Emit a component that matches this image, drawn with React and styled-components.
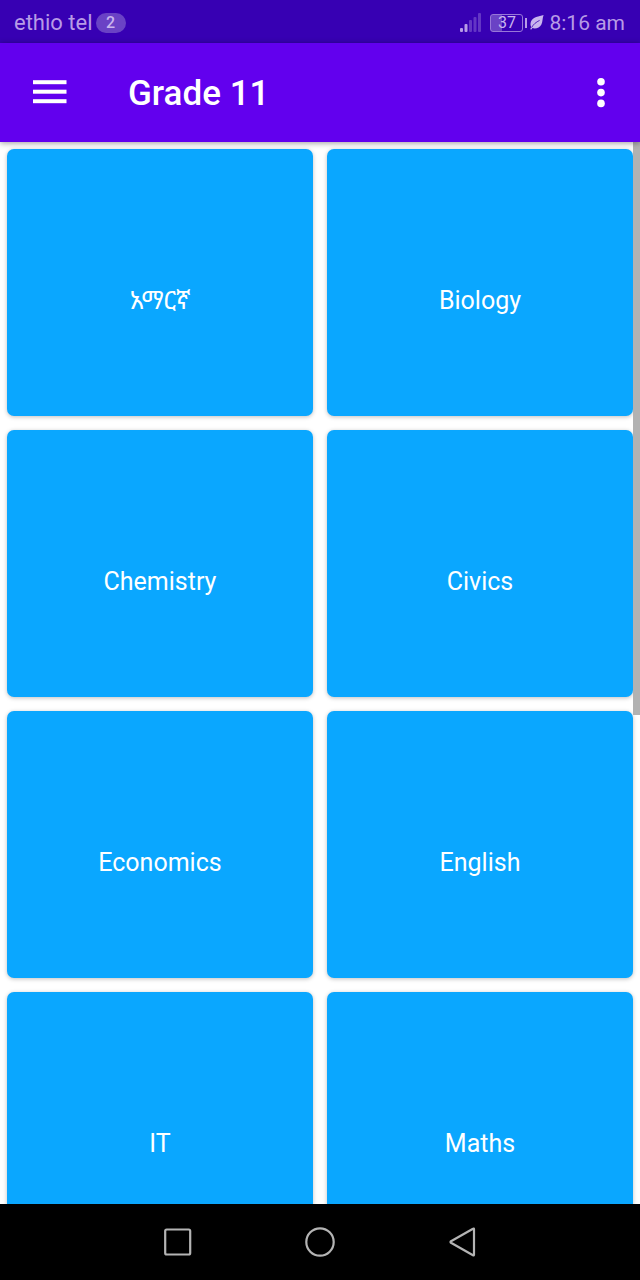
import styled, { createGlobalStyle } from "styled-components";

const subjects = [
    { name: "አማርኛ", lang: "am" },
    { name: "Biology" },
    { name: "Chemistry" },
    { name: "Civics" },
    { name: "Economics" },
    { name: "English" },
    { name: "IT" },
    { name: "Maths" },
]

const GlobalStyle = createGlobalStyle`
    * {
        box-sizing: border-box;
    }
    body {
        margin: 0;
        background: #fff;
        font-family: Roboto, "Noto Sans", "Noto Sans Ethiopic", sans-serif;
    }
    button {
        border: 0;
        padding: 0;
        background: none;
        font-family: inherit;
        cursor: pointer;
    }
    svg {
        display: block;
    }
`

const Screen = styled.div`
    display: flex;
    flex-direction: column;
    height: 100vh;
    overflow: hidden;
`

const StatusBar = styled.div`
    flex: none;
    display: flex;
    align-items: center;
    justify-content: space-between;
    height: 43px;
    padding: 2px 15px 0 14px;
    background: #3700b3;
    color: #b79be6;
    font-size: 22px;
    line-height: 26px;
`

const StatusGroup = styled.div`
    display: flex;
    align-items: center;
    gap: 3px;
`

const Badge = styled.span`
    width: 30px;
    border-radius: 10px;
    background: #6a42c5;
    color: #c9b5ee;
    font-size: 16px;
    font-weight: 500;
    line-height: 20px;
    text-align: center;
`

const Clock = styled.span`
    padding-left: 2px;
    font-size: 21px;
`

const Battery = styled.span`
    display: flex;
    align-items: center;
    gap: 2px;
    margin-left: 6px;

    &::after {
        content: "";
        width: 2px;
        height: 10px;
        background: #b79be6;
    }
`

const BatteryBody = styled.span`
    width: 33px;
    border: 1px solid #9877d8;
    border-radius: 3px;
    background: linear-gradient(to right, #6a42c5 37%, transparent 37%);
    color: #c9b5ee;
    font-size: 16px;
    line-height: 16px;
    text-align: center;
`

const AppBar = styled.header`
    flex: none;
    z-index: 1;
    display: flex;
    align-items: center;
    height: 99px;
    padding: 0 15px;
    background: #6200ee;
    color: #fff;
    box-shadow: 0 1px 6px rgba(0, 0, 0, 0.4);
`

const IconButton = styled.button`
    display: grid;
    place-items: center;
    width: ${props => props.$width}px;
    height: 70px;
    color: inherit;
`

const Title = styled.h1`
    flex: 1;
    margin: 0;
    padding: 2px 0 0 43px;
    font-size: 35px;
    font-weight: 500;
    line-height: 42px;
`

const Content = styled.main`
    position: relative;
    flex: 1;
    min-height: 0;
    overflow: hidden;
`

const Grid = styled.div`
    display: grid;
    grid-template-columns: 1fr 1fr;
    gap: 14px;
    padding: 7px;
`

const Card = styled.button`
    && {
        height: 267px;
        padding-top: 36px;
        border-radius: 7px;
        background: #0aa7ff;
        box-shadow: 0 1px 4px rgba(0, 0, 0, 0.25);
        color: #fff;
        font-size: 25px;
        line-height: 30px;
    }
`

const ScrollThumb = styled.div`
    position: absolute;
    top: 0;
    right: 0;
    width: 7px;
    height: 54%;
    background: #b2b2b2;
`

const NavBar = styled.nav`
    flex: none;
    display: flex;
    justify-content: center;
    height: 76px;
    background: #000;
    color: #b4b4b4;
`

const NavButton = styled.button`
    display: grid;
    place-items: center;
    width: 142px;
    color: inherit;
`

function Signal() {
    return (
        <svg width="21" height="20" viewBox="0 0 21 20" fill="#b79be6">
            <rect x="0" y="15" width="3" height="4" rx="1" />
            <rect x="4.5" y="11" width="3" height="8" rx="1" />
            <rect x="9" y="7" width="3" height="12" rx="1" opacity="0.35" />
            <rect x="13.5" y="4" width="3" height="15" rx="1" opacity="0.35" />
            <rect x="18" y="0" width="3" height="19" rx="1" opacity="0.35" />
        </svg>
    )
}

function Leaf() {
    return (
        <svg width="14" height="15" viewBox="0 0 14 15">
            <path d="M13.6 0C9 1.2 2.8 2.2 1 6.5C0.2 8.5 0.4 10.5 1.2 12L0.2 14.2L1.4 14.5L2.4 13C5.5 14.2 9.6 12.8 11.4 9.4C12.8 6.6 12.4 3 13.6 0Z" fill="#c9b5ee" />
            <path d="M1.6 12.6C3.4 9.2 6 7.2 9.6 5.4" fill="none" stroke="#3700b3" strokeWidth="0.8" />
        </svg>
    )
}

export default function App() {
    return (
        <Screen>
            <GlobalStyle />
            <StatusBar>
                <StatusGroup>
                    <span>ethio tel</span>
                    <Badge>2</Badge>
                </StatusGroup>
                <StatusGroup>
                    <Signal />
                    <Battery>
                        <BatteryBody>37</BatteryBody>
                    </Battery>
                    <Leaf />
                    <Clock>8:16 am</Clock>
                </StatusGroup>
            </StatusBar>

            <AppBar>
                <IconButton $width={70} aria-label="Open menu">
                    <svg width="34" height="27" viewBox="0 0 34 27" fill="currentColor">
                        <rect y="1.2" width="33.5" height="4" />
                        <rect y="10.7" width="33.5" height="4" />
                        <rect y="20.2" width="33.5" height="4" />
                    </svg>
                </IconButton>
                <Title>Grade 11</Title>
                <IconButton $width={48} aria-label="More options">
                    <svg width="8" height="30" viewBox="0 0 8 30" fill="currentColor">
                        <circle cx="4" cy="3.8" r="3.8" />
                        <circle cx="4" cy="14.6" r="3.8" />
                        <circle cx="4" cy="25.4" r="3.8" />
                    </svg>
                </IconButton>
            </AppBar>

            <Content>
                <Grid>
                    {subjects.map(subject => (
                        <Card key={subject.name} lang={subject.lang}>{subject.name}</Card>
                    ))}
                </Grid>
                <ScrollThumb />
            </Content>

            <NavBar>
                <NavButton aria-label="Recent apps">
                    <svg width="30" height="30" viewBox="0 0 30 30" fill="none" stroke="currentColor" strokeWidth="2.2">
                        <rect x="2.2" y="2.5" width="25" height="25" rx="1.5" />
                    </svg>
                </NavButton>
                <NavButton aria-label="Home">
                    <svg width="30" height="30" viewBox="0 0 30 30" fill="none" stroke="currentColor" strokeWidth="2.2">
                        <circle cx="15" cy="15" r="13.7" />
                    </svg>
                </NavButton>
                <NavButton aria-label="Back">
                    <svg width="30" height="30" viewBox="0 0 30 30" fill="none" stroke="currentColor" strokeWidth="2.2" strokeLinejoin="round">
                        <path d="M27 2.2V27.8Q27 28.8 26 28.2L4 15.8Q3 15 4 14.2L26 1.8Q27 1.2 27 2.2Z" />
                    </svg>
                </NavButton>
            </NavBar>
        </Screen>
    )
}
